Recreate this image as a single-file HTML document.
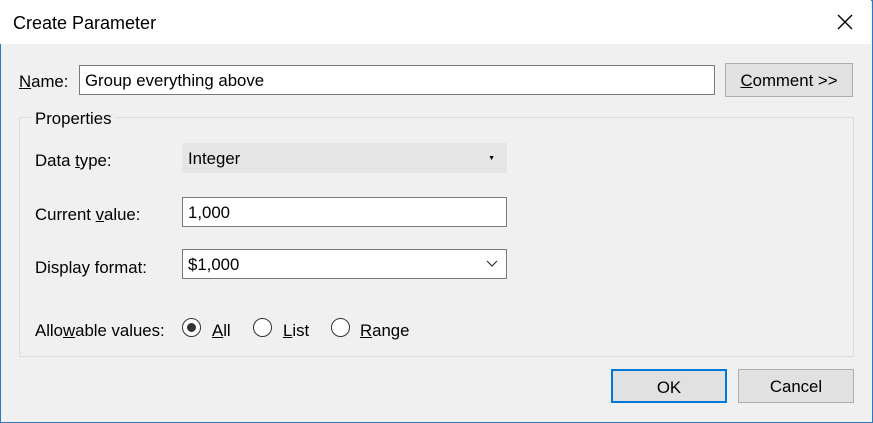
<!DOCTYPE html>
<html><head><style>
*{box-sizing:border-box;margin:0;padding:0}
body{width:873px;height:423px;background:#f0f0f0;font-family:"Liberation Sans",sans-serif;font-size:16.8px;color:#000;position:relative;overflow:hidden}
.win{position:absolute;left:0;top:0;width:873px;height:423px;border:1px solid #2b79c6;}
.title{position:absolute;left:0;top:0;width:871px;height:44px;background:#fff}
.a{position:absolute;white-space:nowrap}
.inp{position:absolute;background:#fff;border:1px solid #7a7a7a;padding-left:5px;line-height:29px}
.btn{position:absolute;background:#e1e1e1;border:1px solid #adadad;text-align:center}
u{text-decoration:underline}
.rad{position:absolute;width:19px;height:19px;border:1.5px solid #333;border-radius:50%;background:#fff}
</style></head><body>
<div class="win"></div>
<div class="title"></div>
<div class="a" style="left:13px;top:13px;font-size:18px">Create Parameter</div>
<svg class="a" style="left:836px;top:13px" width="18" height="18"><path d="M2 2L16 16M16 2L2 16" stroke="#000" stroke-width="1.4"/></svg>
<div class="a" style="left:19px;top:72px"><u>N</u>ame:</div>
<div class="inp" style="left:79px;top:65px;width:636px;height:30px">Group everything above</div>
<div class="btn" style="left:725px;top:63px;width:128px;height:34px;line-height:34px"><u>C</u>omment &gt;&gt;</div>
<div class="a" style="left:19px;top:117px;width:835px;height:240px;border:1px solid #dcdcdc"></div>
<div class="a" style="left:31px;top:109px;background:#f0f0f0;padding:0 4px">Properties</div>
<div class="a" style="left:35px;top:151px">Data <u>t</u>ype:</div>
<div class="a" style="left:182px;top:143px;width:325px;height:30px;background:#e5e5e5;padding-left:6px;line-height:32px">Integer<span style="position:absolute;right:12px;top:0;font-size:7px">▼</span></div>
<div class="a" style="left:35px;top:205px">Current <u>v</u>alue:</div>
<div class="inp" style="left:182px;top:197px;width:325px;height:30px">1,000</div>
<div class="a" style="left:35px;top:258px">Display format:</div>
<div class="inp" style="left:182px;top:249px;width:325px;height:30px">$1,000<svg style="position:absolute;right:8px;top:10px" width="12" height="8"><path d="M1 1L6 6L11 1" fill="none" stroke="#333" stroke-width="1.2"/></svg></div>
<div class="a" style="left:35px;top:321px">Allo<u>w</u>able values:</div>
<div class="rad" style="left:182px;top:318px"><div style="position:absolute;left:3.5px;top:3.5px;width:9px;height:9px;border-radius:50%;background:#333"></div></div>
<div class="a" style="left:212px;top:321px"><u>A</u>ll</div>
<div class="rad" style="left:253px;top:318px"></div>
<div class="a" style="left:283px;top:321px"><u>L</u>ist</div>
<div class="rad" style="left:331px;top:318px"></div>
<div class="a" style="left:360px;top:321px"><u>R</u>ange</div>
<div class="btn" style="left:611px;top:369px;width:116px;height:34px;line-height:33px;border:2px solid #0078d7">OK</div>
<div class="btn" style="left:738px;top:369px;width:116px;height:34px;line-height:34px">Cancel</div>
</body></html>
